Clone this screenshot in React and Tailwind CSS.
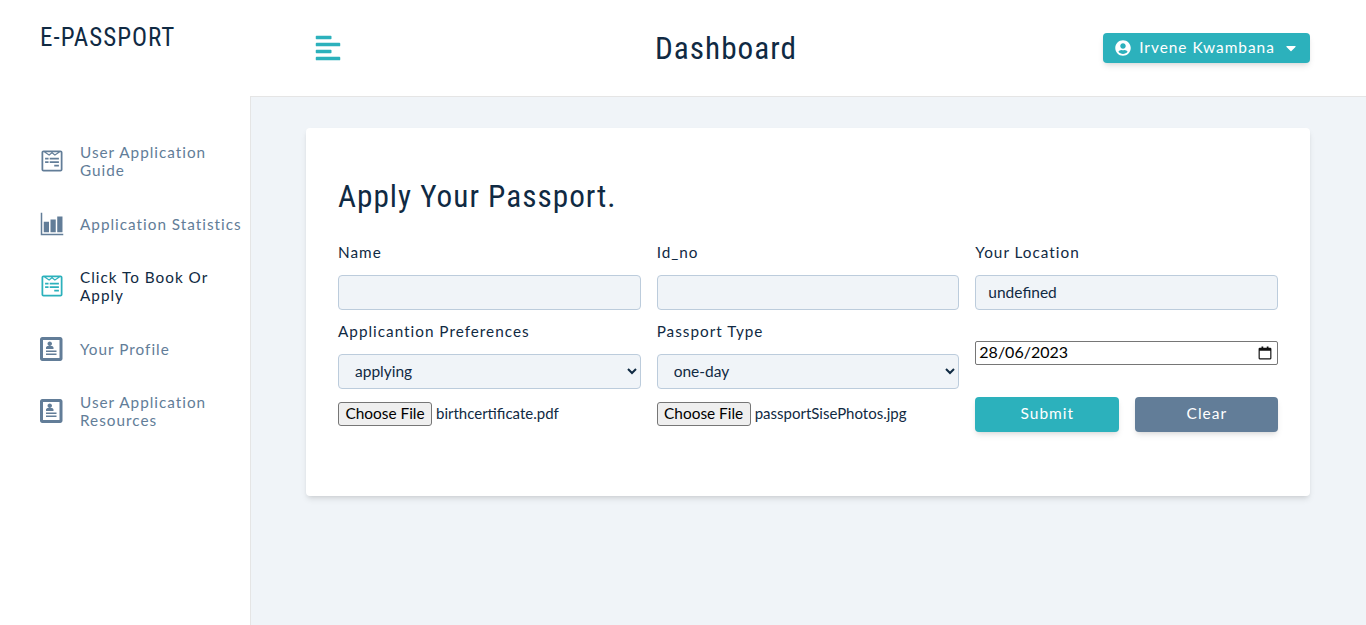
import React from "react";
import { FaAlignLeft, FaCaretDown, FaUserCircle, FaWpforms } from "react-icons/fa";
import { ImProfile } from "react-icons/im";
import { IoBarChartSharp } from "react-icons/io5";

const body = "font-['Lato',sans-serif]";
const heading = "font-['Roboto',sans-serif] [font-stretch:75%] text-[#102a43]";

const navItems = [
  { label: "User Application Guide", Icon: FaWpforms },
  { label: "Application Statistics", Icon: IoBarChartSharp },
  { label: "Click To Book Or Apply", Icon: FaWpforms, active: true },
  { label: "Your Profile", Icon: ImProfile },
  { label: "User Application Resources", Icon: ImProfile },
];

function Field({ label, value }) {
  return (
    <div>
      <label className="block text-[15.3px] leading-[18px] tracking-[1px] text-[#102a43] h-[33px] pt-[1px]">{label}</label>
      <input
        readOnly
        value={value}
        className="w-full h-[35px] px-3 pb-[1px] bg-[#f0f4f8] border border-[#bcccdc] rounded text-[15.5px] text-[#102a43]"
      />
    </div>
  );
}

function SelectField({ label, value }) {
  return (
    <div>
      <label className="block text-[15.3px] leading-[18px] tracking-[1px] text-[#102a43] h-[33px] pt-[1px]">{label}</label>
      <select
        defaultValue={value}
        className="w-full h-[35px] pl-3 pr-1 pb-[2px] bg-[#f0f4f8] border border-[#bcccdc] rounded text-[15.5px] text-[#102a43]"
      >
        <option>{value}</option>
      </select>
    </div>
  );
}

function FileRow({ name }) {
  return (
    <div className="flex items-center mt-[13px] text-[15px] text-[#102a43]">
      <button className="h-[24px] w-[94px] bg-[#efefef] border border-[#767676] rounded-[3px] text-black text-[15.4px] leading-none">
        Choose File
      </button>
      <span className="ml-1 -mt-[1px]">{name}</span>
    </div>
  );
}

export default function App() {
  return (
    <div className={`${body} flex min-h-screen bg-white`}>
      {/* SIDEBAR */}
      <aside className="w-[251px] shrink-0 border-r border-black/10 h-[625px]">
        <div className={`${heading} pl-10 pt-[22px] h-[128px] text-[25px] leading-[32px] tracking-[1px]`}>
          E-PASSPORT
        </div>
        <nav className="flex flex-col gap-[26.5px] pl-10 mt-[15px]">
          {navItems.map(({ label, Icon, active }) => (
            <a
              key={label}
              className={`flex items-center min-h-[36px] text-[15.3px] leading-[18px] tracking-[1px] ${active ? "text-[#102a43]" : "text-[#627d98]"}`}
            >
              <span className="w-10 shrink-0 flex">
                <Icon size={24} className={active ? "text-[#2cb1bc]" : "text-[#627d98]"} />
              </span>
              <span>{label}</span>
            </a>
          ))}
        </nav>
      </aside>

      <div className="flex-1 min-w-0">
        {/* HEADER */}
        <header className="relative -ml-[1px] h-[97px] flex items-center justify-between pl-[64px] pr-[56px] bg-white border-b border-black/10">
          <FaAlignLeft size={28} className="text-[#2cb1bc]" />
          <h1 className={`${heading} ml-[7px] pt-[2px] text-[31.25px] tracking-[1px] leading-none`}>Dashboard</h1>
          <button className="h-[30px] w-[207px] flex items-center justify-center gap-2 bg-[#2cb1bc] text-white rounded shadow-md text-[15.4px] tracking-[1px]">
            <FaUserCircle size={16} className="ml-[1px]" />
            <span>Irvene Kwambana</span>
            <FaCaretDown size={16} />
          </button>
        </header>

        {/* MAIN */}
        <main className="bg-[#f0f4f8] h-[528px] pt-[31px] pl-[55px] pr-[56px]">
          <div className="bg-white rounded shadow-md h-[368px] px-8 pt-[49px]">
            <h3 className={`${heading} text-[31.25px] leading-[40px] tracking-[1px] h-[56px] mb-[9px]`}>
              Apply Your Passport.
            </h3>
            <div className="grid grid-cols-3 gap-x-4 mt-[4px]">
              <Field label="Name" value="" />
              <Field label="Id_no" value="" />
              <Field label="Your Location" value="undefined" />

              <div className="mt-[11px]">
                <SelectField label="Applicantion Preferences" value="applying" />
                <FileRow name="birthcertificate.pdf" />
              </div>
              <div className="mt-[11px]">
                <SelectField label="Passport Type" value="one-day" />
                <FileRow name="passportSisePhotos.jpg" />
              </div>
              <div className="mt-[11px]">
                <div className="mt-[20px] w-full h-[24px] flex items-center justify-between bg-white border border-[#767676] rounded-[2px] text-[16px] text-black pl-[3px] pr-[5px]">
                  <span className="-mt-[2px]">28/06/2023</span>
                  <svg viewBox="0 0 24 24" className="w-[14px] h-[14px]" fill="#111">
                    <path d="M6 1h3v2h6V1h3v2h3a2 2 0 0 1 2 2v16a2 2 0 0 1-2 2H3a2 2 0 0 1-2-2V5a2 2 0 0 1 2-2h3zM3 8v13h18V8z" />
                  </svg>
                </div>
                <div className="grid grid-cols-[144px_143px] gap-4 mt-[32px]">
                  <button className="h-[35px] pb-[2px] bg-[#2cb1bc] text-white rounded shadow-md text-[15.5px] tracking-[1px]">Submit</button>
                  <button className="h-[35px] pb-[2px] bg-[#627d98] text-white rounded shadow-md text-[15.5px] tracking-[1px]">Clear</button>
                </div>
              </div>
            </div>
          </div>
        </main>
      </div>
    </div>
  );
}
